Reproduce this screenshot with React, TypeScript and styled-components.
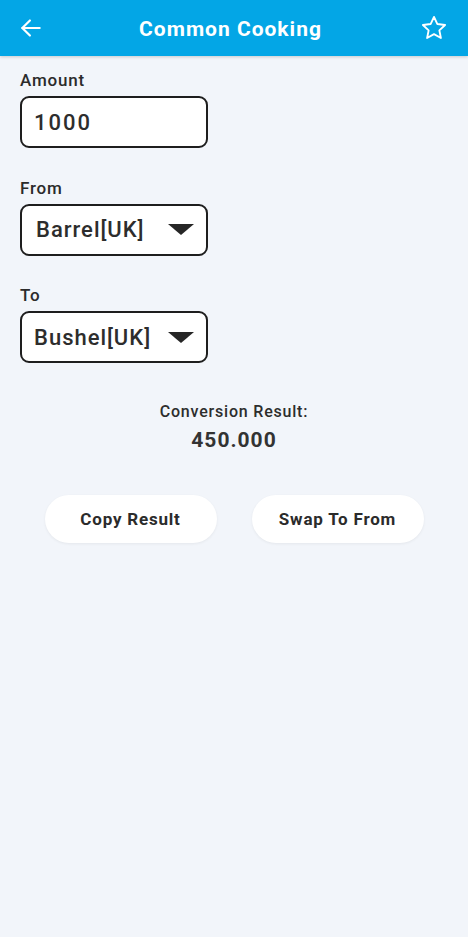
import React from "react";
import styled, { createGlobalStyle } from "styled-components";

const Global = createGlobalStyle`
  html, body { margin: 0; padding: 0; background: #f2f5fa; }
  body { font-family: Roboto, "Noto Sans", sans-serif; }
  * { box-sizing: border-box; }
`;

const Page = styled.div`
  width: 468px;
  min-height: 937px;
  background: #f2f5fa;
`;

const Header = styled.header`
  height: 56px;
  background: #03a6e6;
  display: flex;
  align-items: center;
  justify-content: space-between;
  padding: 0 20px 0 17px;
  box-shadow: 0 1px 3px rgba(0, 0, 0, 0.18);
`;

const IconBtn = styled.span`
  width: 28px;
  height: 28px;
  display: flex;
  align-items: center;
  justify-content: center;
`;

const Title = styled.h1`
  margin: 0 0 -2px -4px;
  color: #fff;
  font-size: 21px;
  font-weight: 700;
  letter-spacing: 1px;
`;

const Content = styled.main`
  padding: 14px 20px 0;
  display: flex;
  flex-direction: column;
`;

const Field = styled.div`
  display: flex;
  flex-direction: column;
  gap: 6px;
  margin-bottom: 29.5px;
`;

const Label = styled.label`
  font-size: 17px;
  font-weight: 500;
  color: #2b2b2b;
  letter-spacing: 0.8px;
  line-height: 20px;
`;

const Box = styled.div<{ $pad: number; $spacing?: number }>`
  width: 188px;
  height: 52px;
  border: 2px solid #1e1e1e;
  border-radius: 9px;
  background: #fff;
  display: flex;
  align-items: center;
  justify-content: space-between;
  padding: 0 12px 0 ${(p) => p.$pad}px;
  font-size: 22px;
  font-weight: 500;
  color: #2d2d2d;
  letter-spacing: ${(p) => p.$spacing ?? 1}px;
`;

const Caret = styled.span`
  width: 0;
  height: 0;
  border-left: 13px solid transparent;
  border-right: 13px solid transparent;
  border-top: 11px solid #262626;
`;

const Result = styled.div`
  display: flex;
  flex-direction: column;
  align-items: center;
  margin-top: 9px;
  gap: 7px;
`;

const ResultLabel = styled.div`
  font-size: 16px;
  font-weight: 500;
  color: #2d2d2d;
  letter-spacing: 0.8px;
`;

const ResultValue = styled.div`
  font-size: 21px;
  font-weight: 700;
  color: #333;
  letter-spacing: 1px;
`;

const Buttons = styled.div`
  display: flex;
  justify-content: center;
  gap: 35px;
  margin-top: 43px;
`;

const Btn = styled.button`
  width: 172px;
  height: 48px;
  border: none;
  border-radius: 24px;
  background: #fff;
  font-family: Roboto, sans-serif;
  font-size: 17px;
  font-weight: 700;
  color: #2b2b2b;
  letter-spacing: 0.8px;
  box-shadow: 0 1px 3px rgba(0, 0, 0, 0.06);
`;

export default function App() {
  return (
    <Page>
      <Global />
      <Header>
        <IconBtn>
          <svg width="26" height="26" viewBox="0 0 24 24" fill="none" stroke="#fff" strokeWidth="2" strokeLinecap="round" strokeLinejoin="round">
            <path d="M20 12H4" />
            <path d="M11 5l-7 7 7 7" />
          </svg>
        </IconBtn>
        <Title>Common Cooking</Title>
        <IconBtn>
          <svg width="28" height="28" viewBox="0 0 24 24" fill="none" stroke="#fff" strokeWidth="1.6" strokeLinejoin="round">
            <path d="M12 2.5l2.9 6.1 6.6.8-4.9 4.6 1.3 6.6L12 17.3l-5.9 3.3 1.3-6.6-4.9-4.6 6.6-.8z" />
          </svg>
        </IconBtn>
      </Header>
      <Content>
        <Field>
          <Label>Amount</Label>
          <Box $pad={12} $spacing={2}>1000</Box>
        </Field>
        <Field>
          <Label>From</Label>
          <Box $pad={14}>
            Barrel[UK]
            <Caret />
          </Box>
        </Field>
        <Field>
          <Label>To</Label>
          <Box $pad={12}>
            Bushel[UK]
            <Caret />
          </Box>
        </Field>
        <Result>
          <ResultLabel>Conversion Result:</ResultLabel>
          <ResultValue>450.000</ResultValue>
        </Result>
      </Content>
      <Buttons>
        <Btn>Copy Result</Btn>
        <Btn>Swap To From</Btn>
      </Buttons>
    </Page>
  );
}
